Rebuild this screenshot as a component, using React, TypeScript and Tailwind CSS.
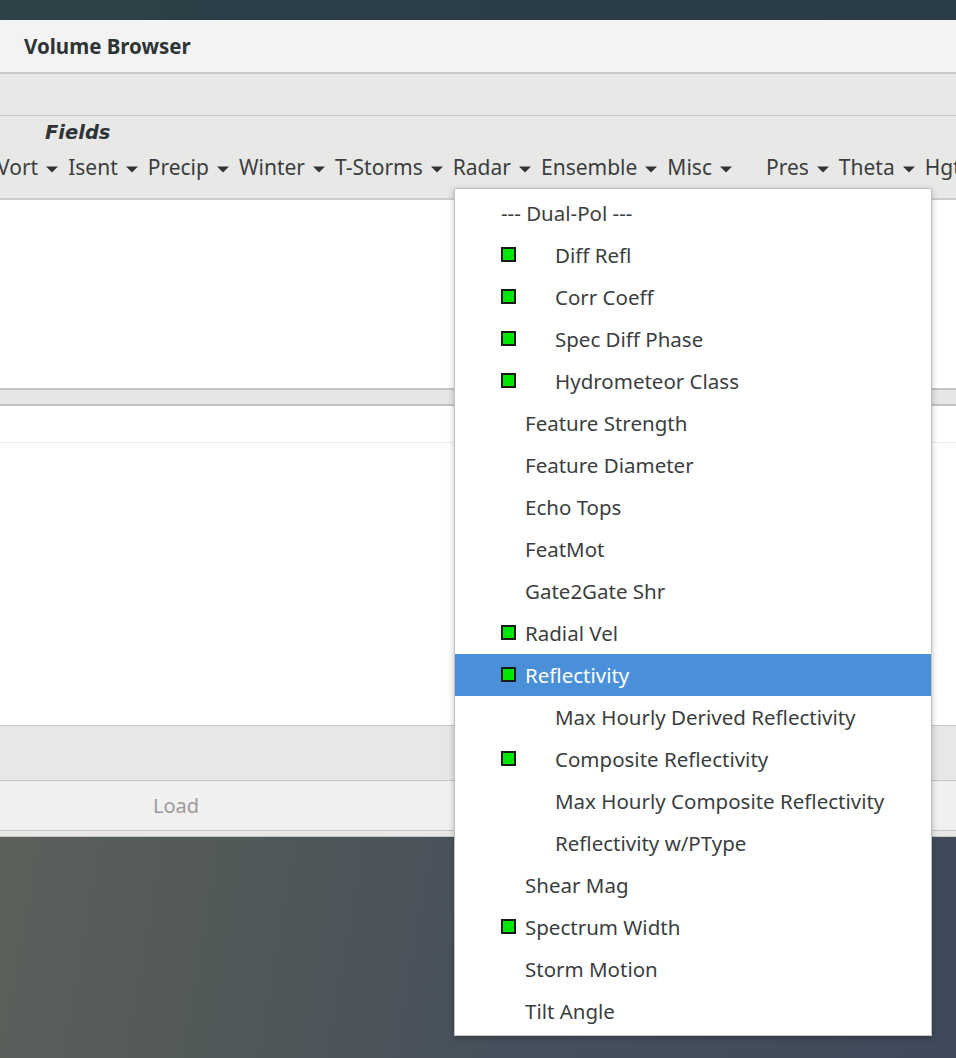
import React from 'react';

type Item = { label: string; dot?: boolean; indent?: boolean; header?: boolean; active?: boolean };

const radarItems: Item[] = [
  { label: '--- Dual-Pol ---', header: true },
  { label: 'Diff Refl', dot: true, indent: true },
  { label: 'Corr Coeff', dot: true, indent: true },
  { label: 'Spec Diff Phase', dot: true, indent: true },
  { label: 'Hydrometeor Class', dot: true, indent: true },
  { label: 'Feature Strength' },
  { label: 'Feature Diameter' },
  { label: 'Echo Tops' },
  { label: 'FeatMot' },
  { label: 'Gate2Gate Shr' },
  { label: 'Radial Vel', dot: true },
  { label: 'Reflectivity', dot: true, active: true },
  { label: 'Max Hourly Derived Reflectivity', indent: true },
  { label: 'Composite Reflectivity', dot: true, indent: true },
  { label: 'Max Hourly Composite Reflectivity', indent: true },
  { label: 'Reflectivity w/PType', indent: true },
  { label: 'Shear Mag' },
  { label: 'Spectrum Width', dot: true },
  { label: 'Storm Motion' },
  { label: 'Tilt Angle' },
];

const menus = ['Vort', 'Isent', 'Precip', 'Winter', 'T-Storms', 'Radar', 'Ensemble', 'Misc'];
const menus2 = ['Pres', 'Theta', 'Hgt'];

function Caret() {
  return (
    <svg width="12" height="7" viewBox="0 0 12 7" className="ml-[8px] mr-[10px] mt-[2px] shrink-0">
      <path d="M0 0.5 L12 0.5 L6 6.5 Z" fill="#2e3436" />
    </svg>
  );
}

function MenuButton({ label }: { label: string }) {
  return (
    <div className="flex items-center shrink-0">
      <span>{label}</span>
      <Caret />
    </div>
  );
}

function Square() {
  return <span className="inline-block w-[15px] h-[15px] bg-[#00e600] border-[2px] border-[#1a1a1a]" />;
}

function MenuRow({ item }: { item: Item }) {
  return (
    <div
      className={`relative h-[42px] flex items-center ${
        item.active ? 'bg-[#4a90d9] text-white' : 'text-[#3b3e40]'
      }`}
    >
      {item.dot && (
        <span className="absolute left-[46px] top-[13px] flex">
          <Square />
        </span>
      )}
      <span className={item.header ? 'pl-[46px]' : item.indent ? 'pl-[100px]' : 'pl-[70px]'}>
        {item.label}
      </span>
    </div>
  );
}

export default function App() {
  return (
    <div
      className="relative w-[956px] h-[1058px] overflow-hidden bg-[linear-gradient(100deg,#62655e_0%,#535a58_30%,#46505c_60%,#3e4a5a_100%)]"
      style={{ fontFamily: '"Noto Sans", "Open Sans", sans-serif' }}
    >
      <div className="h-[20px] bg-[linear-gradient(90deg,#2c4148,#2a3b48)]" />

      <div className="bg-[#f3f3f3] h-[54px] border-b-[2px] border-[#c9c9c7] flex items-center pl-[24px]">
        <span className="text-[20.5px] font-bold text-[#2e3436]">Volume Browser</span>
      </div>

      <div className="h-[42px] bg-[#e8e8e7] border-b border-[#cdcdcb]" />

      <div className="h-[84px] bg-[#e8e8e7] border-b-[2px] border-[#cdcdcb] flex flex-col">
        <div
          className="pl-[45px] pt-[2px] h-[32px] text-[19.5px] font-bold italic text-[#2e3436]"
          style={{ fontFamily: '"DejaVu Sans", sans-serif' }}
        >
          Fields
        </div>
        <div className="flex items-center ml-[-3px] text-[21px] text-[#3b3e40] h-[40px]">
          {menus.map((m) => (
            <MenuButton key={m} label={m} />
          ))}
          <div className="w-[24px] shrink-0" />
          {menus2.map((m) => (
            <MenuButton key={m} label={m} />
          ))}
        </div>
      </div>

      <div className="h-[188px] bg-white" />
      <div className="h-[18px] bg-[#e6e6e4] border-y-[2px] border-[#c4c4c2]" />
      <div className="h-[37px] bg-white border-b border-[#ebebeb]" />
      <div className="h-[283px] bg-white border-b border-[#c9c9c7]" />
      <div className="h-[55px] bg-[#e7e7e5] border-b border-[#c6c6c4]" />
      <div className="h-[50px] bg-[#f0f0f0] border-b border-[#c6c6c4] flex items-center">
        <span className="ml-[153px] text-[20px] text-[#9a9a9a]">Load</span>
      </div>
      <div className="h-[6px] bg-[#e8e8e7] border-b border-[#c6c6c4]" />

      <div className="absolute left-[454px] top-[188px] w-[478px] bg-white border border-[#c2c2c0] shadow-[0_2px_6px_rgba(0,0,0,0.25)] py-[3px] text-[20.5px]">
        {radarItems.map((it) => (
          <MenuRow key={it.label} item={it} />
        ))}
      </div>
    </div>
  );
}
